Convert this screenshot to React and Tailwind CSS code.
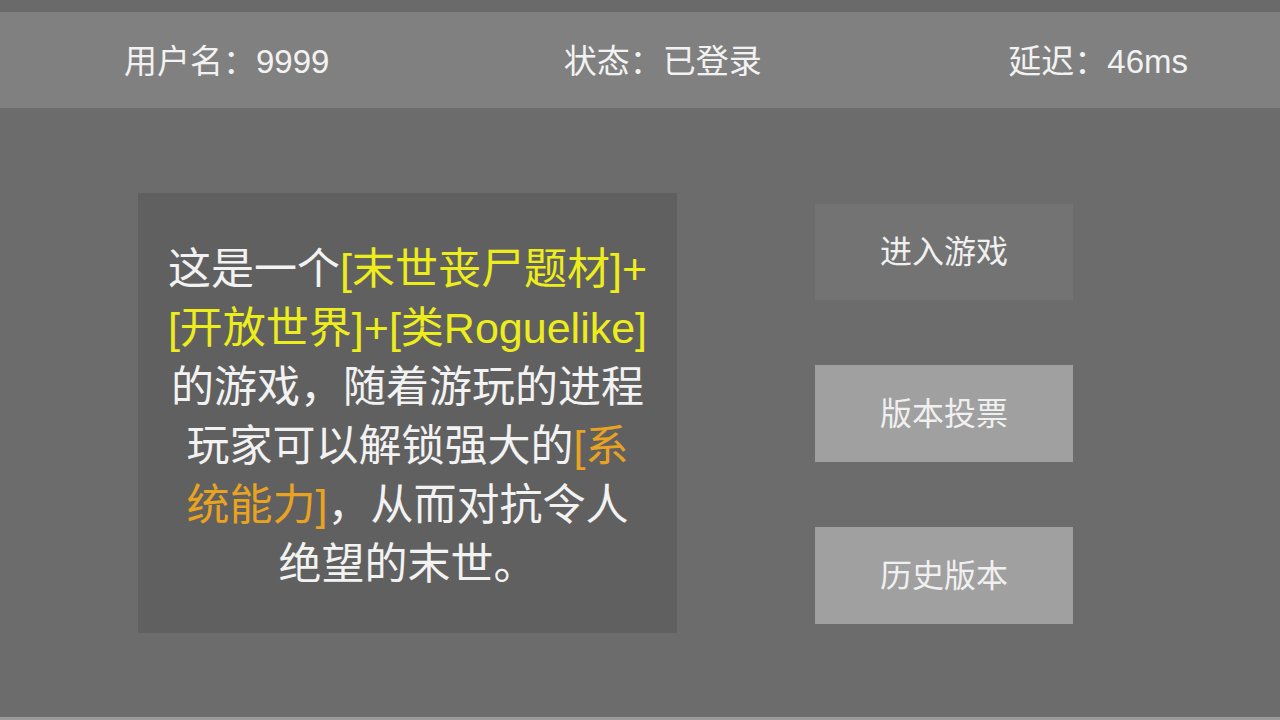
export default function App() {
  const font = { fontFamily: '"Liberation Sans", "Noto Sans CJK SC", sans-serif' }

  return (
    <div
      className="w-[1280px] h-[720px] flex flex-col bg-[#6c6c6c] text-[#f2f2f2] overflow-hidden"
      style={font}
    >
      <div className="h-[12px] bg-[#6a6a6a]" />

      <div className="h-[96px] bg-[#808080] flex items-center justify-between pl-[124px] pr-[92px] pt-[2px] text-[33px] leading-none">
        <span>用户名：9999</span>
        <span className="mr-[12px]">状态：已登录</span>
        <span>延迟：46ms</span>
      </div>

      <div className="flex-1 flex pl-[138px] pt-[85px]">
        <div className="w-[539px] h-[440px] bg-[#606060] flex flex-col items-center justify-center text-[43px] leading-[59px] text-center pt-[8px]">
          <p>
            这是一个<span className="text-[#eded1c]">[末世丧尸题材]+</span>
          </p>
          <p className="text-[#eded1c]">[开放世界]+[类Roguelike]</p>
          <p>的游戏，随着游玩的进程</p>
          <p>
            玩家可以解锁强大的<span className="text-[#e9a320]">[系</span>
          </p>
          <p>
            <span className="text-[#e9a320]">统能力]</span>，从而对抗令人
          </p>
          <p>绝望的末世。</p>
        </div>

        <div className="ml-[138px] pt-[11px] flex flex-col gap-[65px]">
          <button className="w-[258px] h-[96px] bg-[#737373] text-[32px] text-[#f0f0f0]">
            进入游戏
          </button>
          <button className="w-[258px] h-[97px] bg-[#a0a0a0] text-[32px] text-[#f0f0f0]">
            版本投票
          </button>
          <button className="w-[258px] h-[97px] bg-[#a0a0a0] text-[32px] text-[#f0f0f0]">
            历史版本
          </button>
        </div>
      </div>

      <div className="h-[3px] bg-[#9a9a9a]" />
    </div>
  )
}
